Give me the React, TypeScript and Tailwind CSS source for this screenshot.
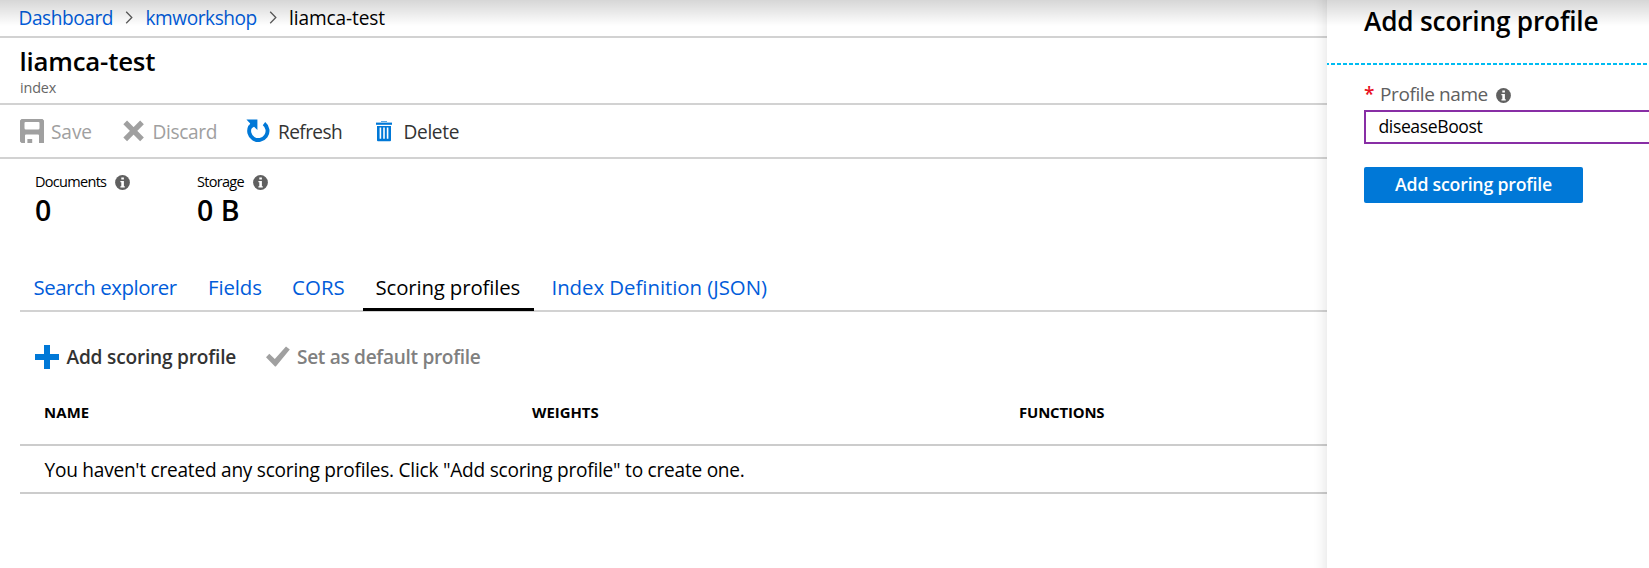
import React from 'react';

function Chevron() {
  return (
    <svg className="h-[14px] w-[9px] shrink-0" viewBox="0 0 9 14" fill="none" stroke="#5c5c5c" strokeWidth="1.3">
      <path d="M1.2 0.8L6.8 6.5L1.2 12.2" />
    </svg>
  );
}

function SaveIcon() {
  return (
    <svg className="h-6 w-6 shrink-0" viewBox="0 0 24 24" fill="#a0a0a0">
      <path
        fillRule="evenodd"
        d="M1.5 0H22.5L24 1.5V24H19V16.5Q19 15.5 18 15.5H6Q5 15.5 5 16.5V24H1.5L0 22.5V1.5ZM5.5 3Q4.5 3 4.5 4V9Q4.5 10.5 5.8 10.5H18.2Q19.5 10.5 19.5 9V4Q19.5 3 18.5 3Z"
      />
      <path d="M7.4 20H12.2V24H7.4Z" />
    </svg>
  );
}

function DiscardIcon() {
  return (
    <svg className="h-[22px] w-[22px] shrink-0" viewBox="0 0 22 22" fill="none" stroke="#a0a0a0" strokeWidth="5.2">
      <path d="M2.2 2.4L19 19.4M19 2.4L2.2 19.4" />
    </svg>
  );
}

function RefreshIcon() {
  return (
    <svg className="h-6 w-6 shrink-0" viewBox="0 0 24 24">
      <path d="M18 4.6A9.2 9.2 0 1 1 4.4 7.2" fill="none" stroke="#0078d7" strokeWidth="3.9" />
      <path d="M0.4 0.4H11.4V10.9L8 7.8L4.2 10.2L1.8 8.4L4.2 4.4Z" fill="#0078d7" />
    </svg>
  );
}

function TrashIcon() {
  return (
    <svg className="h-[22px] w-4 shrink-0" viewBox="0 0 16 22">
      <path d="M5 1H11V2H5Z" fill="#59a9e6" />
      <path d="M0 2.6H16V4.8H0Z" fill="#0078d7" />
      <path d="M1 6H15V20.2Q15 21.2 14 21.2H2Q1 21.2 1 20.2Z" fill="#0078d7" />
      <path d="M3.6 7.4H5.2V18.8H3.6ZM7.2 7.4H8.8V18.8H7.2ZM10.8 7.4H12.4V18.8H10.8Z" fill="#fff" />
    </svg>
  );
}

function PlusIcon() {
  return (
    <svg className="h-6 w-6 shrink-0" viewBox="0 0 24 24" fill="#0078d7">
      <path d="M9 0H15V9H24V15H15V24H9V15H0V9H9Z" />
    </svg>
  );
}

function CheckIcon() {
  return (
    <svg className="h-[21px] w-6 shrink-0" viewBox="0 0 24 21" fill="#a0a0a0">
      <path d="M0 11.2L3.3 7.8L8.8 12.9L20 0.6L23.8 3.4L9.8 20.4H9Z" />
    </svg>
  );
}

function InfoIcon() {
  return (
    <svg className="h-[15px] w-[15px] shrink-0" viewBox="0 0 15 15">
      <circle cx="7.5" cy="7.5" r="7.4" fill="#606060" />
      <path d="M6.3 2.4H8.9V4.6H6.3ZM5.4 6H8.9V11.2H9.8V12.4H5.4V11.2H6.3V7.2H5.4Z" fill="#fff" />
    </svg>
  );
}

export default function App() {
  return (
    <div className="relative flex h-[568px] w-[1649px] overflow-hidden bg-white font-['Open_Sans','Noto_Sans',sans-serif] whitespace-nowrap text-black">
      <main className="flex w-[1327px] shrink-0 flex-col">
        <nav className="flex h-[38px] items-center border-b-2 border-[#d2d2d2] pl-[18.5px] text-[19.1px]">
          <a className="w-[106.5px] tracking-[-0.45px] text-[#015cda]">Dashboard</a>
          <Chevron />
          <a className="ml-[11.5px] w-[123.5px] tracking-[-0.45px] text-[#015cda]">kmworkshop</a>
          <Chevron />
          <span className="ml-[11px] tracking-[-0.12px]">liamca-test</span>
        </nav>

        <header className="flex h-[67px] flex-col border-b-2 border-[#d2d2d2] pt-[6px] pl-[19.5px]">
          <h1 className="h-[34px] text-[25.8px] leading-[34px] font-semibold tracking-[-0.2px]">liamca-test</h1>
          <p className="pl-[0.5px] text-[14.4px] leading-[20px] tracking-[-0.15px] text-[#666]">index</p>
        </header>

        <div className="flex h-[54px] items-center border-b-2 border-[#d2d2d2] pl-5 text-[19.1px] text-[#333]">
          <div className="flex h-6 w-[102.5px] items-center text-[#a0a0a0]">
            <SaveIcon />
            <span className="pt-[2px] pl-[7px] leading-[26px] tracking-[-0.1px]">Save</span>
          </div>
          <div className="flex h-6 w-[123.5px] items-center text-[#a0a0a0]">
            <DiscardIcon />
            <span className="pt-[2px] pl-[8px] leading-[26px] tracking-[-0.35px]">Discard</span>
          </div>
          <div className="flex h-6 w-[130px] items-center">
            <RefreshIcon />
            <span className="pt-[2px] pl-[8px] leading-[26px] tracking-[-0.6px]">Refresh</span>
          </div>
          <div className="flex h-6 items-center">
            <TrashIcon />
            <span className="pt-[2px] pl-[11.5px] leading-[26px] tracking-[-0.35px]">Delete</span>
          </div>
        </div>

        <section className="flex h-[106px] pt-[13px] pl-[35px]">
          <div className="w-[162px]">
            <div className="flex h-5 items-center">
              <span className="w-[79.5px] text-[14.5px] tracking-[-0.7px]">Documents</span>
              <InfoIcon />
            </div>
            <div className="pt-px text-[28.5px] leading-[34px] font-semibold">0</div>
          </div>
          <div>
            <div className="flex h-5 items-center">
              <span className="w-[56px] text-[14.5px] tracking-[-0.7px]">Storage</span>
              <InfoIcon />
            </div>
            <div className="pt-px text-[28.5px] leading-[34px] font-semibold">0 B</div>
          </div>
        </section>

        <div className="ml-5 flex h-[47px] border-b-2 border-[#d2d2d2] text-[20.4px] leading-[45px] text-[#015cda]">
          <a className="ml-[13.5px] w-[174.5px] tracking-[-0.45px]">Search explorer</a>
          <a className="w-[84px] tracking-[-0.1px]">Fields</a>
          <a className="w-[71px] tracking-[0.1px]">CORS</a>
          <a className="h-[46px] w-[171px] border-b-[3px] border-black pl-[12.5px] tracking-[-0.15px] text-black">
            Scoring profiles
          </a>
          <a className="ml-[17.5px] tracking-[-0.04px]">Index Definition (JSON)</a>
        </div>

        <div className="mt-6 ml-[35px] flex h-[42px] items-center text-[19.1px] font-semibold">
          <button className="flex w-[231px] items-center text-[#333]">
            <PlusIcon />
            <span className="pl-[7.5px] tracking-[-0.2px]">Add scoring profile</span>
          </button>
          <button className="flex items-center text-[#808080]">
            <CheckIcon />
            <span className="pl-[7px] tracking-[-0.32px]">Set as default profile</span>
          </button>
        </div>

        <div className="mt-[2px] ml-5">
          <div className="flex h-[66px] items-center border-b-2 border-[#ccc] pl-[24px] text-[14.9px] font-bold">
            <div className="w-[488px] tracking-[0.15px]">NAME</div>
            <div className="w-[487px]">WEIGHTS</div>
            <div className="tracking-[-0.15px]">FUNCTIONS</div>
          </div>
          <div className="flex h-[48px] items-center border-b-2 border-[#ccc] pt-px pl-[24.5px] text-[19.1px] leading-[26px] tracking-[-0.25px]">
            You haven't created any scoring profiles. Click "Add scoring profile" to create one.
          </div>
        </div>
      </main>

      <aside className="relative flex w-[322px] shrink-0 flex-col bg-white shadow-[19px_0_13px_20px_rgba(0,0,0,0.12)]">
        <h2 className="h-[63px] pt-[4px] pl-[37px] text-[26.2px] leading-[34px] font-semibold tracking-[-0.18px]">
          Add scoring profile
        </h2>
        <div className="h-[2px] bg-[repeating-linear-gradient(90deg,#00bcf2_0px,#00bcf2_2px,transparent_2px,transparent_4px,#00bcf2_4px,#00bcf2_6px)]" />
        <div className="mt-[14px] flex h-[31px] items-center pl-[37px] text-[19px] leading-[28px] text-[#606060]">
          <span className="w-[16px] pb-px text-[19px] font-semibold text-[#e81123]">*</span>
          <span className="w-[116px] pb-px tracking-[-0.4px]">Profile name</span>
          <span className="pt-[2px]">
            <InfoIcon />
          </span>
        </div>
        <div className="ml-[37px] flex h-[34px] w-[330px] items-center border-2 border-[#882ea5] pb-px pl-[12.5px] text-[17.6px] tracking-[-0.4px]">
          diseaseBoost
        </div>
        <button className="mt-[23px] ml-[37px] h-9 w-[219px] rounded-[2px] bg-[#0078d7] pb-[3px] text-[17.7px] leading-[26px] font-semibold tracking-[-0.2px] text-white">
          Add scoring profile
        </button>
      </aside>

      <div className="pointer-events-none absolute inset-x-0 top-0 h-[26px] bg-linear-to-b from-black/16 to-transparent" />
    </div>
  );
}
